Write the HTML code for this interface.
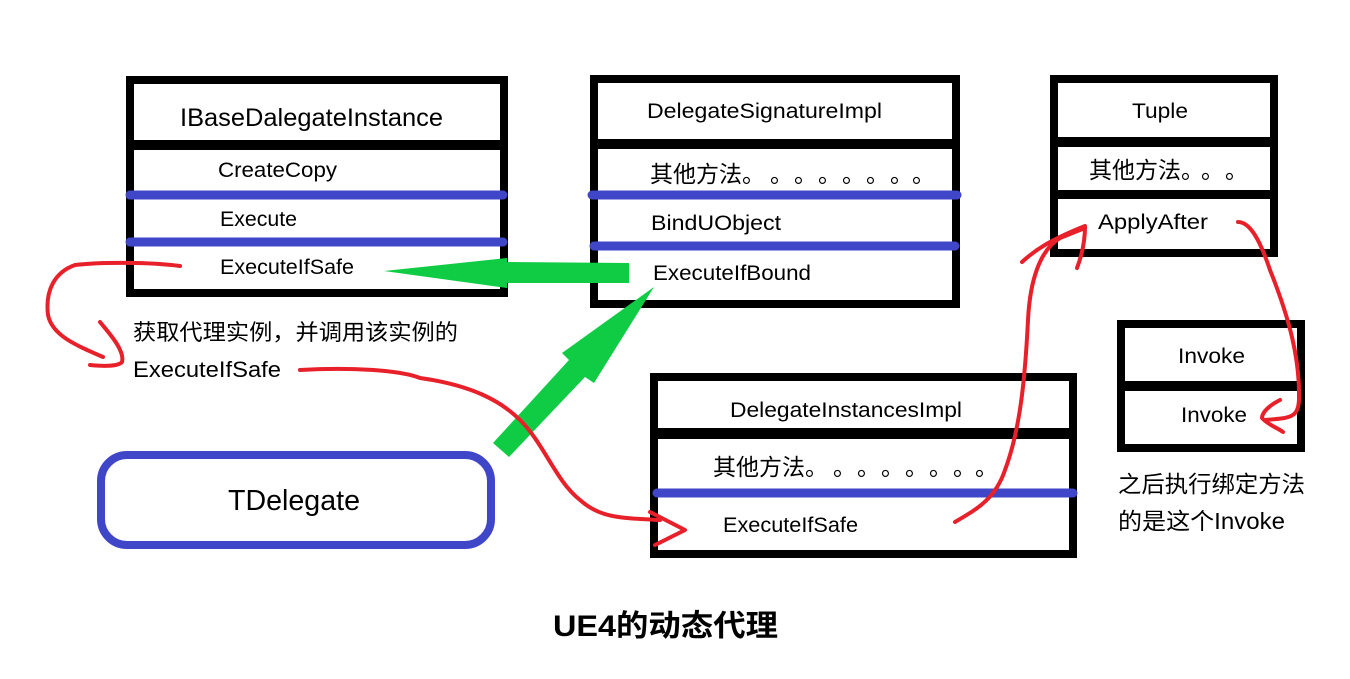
<!DOCTYPE html>
<html><head><meta charset="utf-8"><style>
html,body{margin:0;padding:0;background:#fff;}
svg{display:block}
text{font-family:"Liberation Sans","Noto Sans CJK SC",sans-serif;fill:#000}
</style></head><body>
<svg width="1350" height="679" viewBox="0 0 1350 679" xmlns="http://www.w3.org/2000/svg">
<rect width="1350" height="679" fill="#fff"/>
<!-- Box1 -->
<rect x="130" y="80" width="374" height="213" fill="#fff" stroke="#000" stroke-width="8"/>
<rect x="130" y="140" width="374" height="10" fill="#000"/>
<line x1="130" y1="195" x2="503" y2="195" stroke="#4046c8" stroke-width="9" stroke-linecap="round"/>
<line x1="130" y1="242" x2="503" y2="242" stroke="#4046c8" stroke-width="9" stroke-linecap="round"/>
<text x="180" y="126" font-size="25" textLength="263" lengthAdjust="spacingAndGlyphs">IBaseDalegateInstance</text>
<text x="218" y="177" font-size="21" textLength="119" lengthAdjust="spacingAndGlyphs">CreateCopy</text>
<text x="220" y="226" font-size="21" textLength="77" lengthAdjust="spacingAndGlyphs">Execute</text>
<text x="220" y="274" font-size="21" textLength="134" lengthAdjust="spacingAndGlyphs">ExecuteIfSafe</text>
<!-- Box2 -->
<rect x="594" y="79" width="362" height="225" fill="#fff" stroke="#000" stroke-width="8"/>
<rect x="594" y="139" width="362" height="10" fill="#000"/>
<line x1="592" y1="195" x2="957" y2="195" stroke="#4046c8" stroke-width="9" stroke-linecap="round"/>
<line x1="594" y1="246" x2="955" y2="246" stroke="#4046c8" stroke-width="9" stroke-linecap="round"/>
<text x="647" y="118" font-size="21" textLength="235" lengthAdjust="spacingAndGlyphs">DelegateSignatureImpl</text>
<text x="650" y="182" font-size="23">其他方法。</text>
<text x="770 794 818 842 866 890 912" y="182" font-size="23">。。。。。。。</text>
<text x="651" y="230" font-size="21" textLength="130" lengthAdjust="spacingAndGlyphs">BindUObject</text>
<text x="653" y="280" font-size="21" textLength="158" lengthAdjust="spacingAndGlyphs">ExecuteIfBound</text>
<!-- Tuple -->
<rect x="1054" y="79" width="220" height="174" fill="#fff" stroke="#000" stroke-width="8"/>
<rect x="1054" y="137" width="220" height="10" fill="#000"/>
<rect x="1054" y="190" width="220" height="9" fill="#000"/>
<text x="1132" y="118" font-size="21" textLength="56" lengthAdjust="spacingAndGlyphs">Tuple</text>
<text x="1089" y="178" font-size="23">其他方法。</text>
<text x="1201 1225" y="178" font-size="23">。。</text>
<text x="1098" y="229" font-size="21" textLength="110" lengthAdjust="spacingAndGlyphs">ApplyAfter</text>
<!-- Invoke -->
<rect x="1121" y="324" width="180" height="124" fill="#fff" stroke="#000" stroke-width="8"/>
<rect x="1121" y="381" width="180" height="10" fill="#000"/>
<text x="1178" y="363" font-size="21" textLength="67" lengthAdjust="spacingAndGlyphs">Invoke</text>
<text x="1181" y="422" font-size="21" textLength="66" lengthAdjust="spacingAndGlyphs">Invoke</text>
<!-- Box3 -->
<rect x="654" y="377" width="419" height="177" fill="#fff" stroke="#000" stroke-width="8"/>
<rect x="654" y="428" width="419" height="11" fill="#000"/>
<line x1="657" y1="493" x2="1073" y2="493" stroke="#4046c8" stroke-width="9" stroke-linecap="round"/>
<text x="730" y="417" font-size="21" textLength="232" lengthAdjust="spacingAndGlyphs">DelegateInstancesImpl</text>
<text x="713" y="475" font-size="23">其他方法。</text>
<text x="833 857 881 905 929 953 975" y="475" font-size="23">。。。。。。。</text>
<text x="723" y="532" font-size="21" textLength="135" lengthAdjust="spacingAndGlyphs">ExecuteIfSafe</text>
<!-- right notes -->
<text x="1118" y="492" font-size="23" textLength="187" lengthAdjust="spacingAndGlyphs">之后执行绑定方法</text>
<text x="1118" y="529" font-size="23" textLength="167" lengthAdjust="spacingAndGlyphs">的是这个Invoke</text>
<!-- left notes -->
<text x="133" y="340" font-size="22" textLength="325" lengthAdjust="spacingAndGlyphs">获取代理实例，并调用该实例的</text>
<text x="133" y="377" font-size="22" textLength="148" lengthAdjust="spacingAndGlyphs">ExecuteIfSafe</text>
<!-- TDelegate -->
<rect x="101" y="455" width="390" height="90" rx="26" fill="#fff" stroke="#4046c8" stroke-width="8"/>
<text x="228" y="510" font-size="29" textLength="132" lengthAdjust="spacingAndGlyphs">TDelegate</text>
<!-- title -->
<text x="553" y="636" font-size="30" font-weight="bold" textLength="225" lengthAdjust="spacingAndGlyphs">UE4的动态代理</text>
<!-- green arrows -->
<polygon points="384,271 507,258 507,262 629,263 629,283 507,283 507,288" fill="#10cc44"/>
<polygon points="654,287 594,383 585,377 509,457 493,443 569,360 562,353" fill="#10cc44"/>
<!-- red curves -->
<g fill="none" stroke="#e8202a" stroke-width="4" stroke-linecap="round" stroke-linejoin="round">
<path d="M180,266 C150,262 100,262 75,265 C55,272 45,290 48,315 C52,335 75,345 103,357"/>
<path d="M100,322 C108,332 125,350 122,362 C118,367 100,366 90,365"/>
<path d="M300,370 C350,367 400,370 420,378 C470,385 500,400 520,420 C545,445 555,480 580,500 C600,518 620,518 660,520"/>
<path d="M650,512 L685,530 L655,545"/>
<path d="M955,522 C975,510 995,500 1005,470 C1020,430 1025,380 1028,320 C1030,280 1040,250 1060,238 L1085,228"/>
<path d="M1022,262 C1035,250 1050,240 1085,226 C1085,240 1082,255 1077,268"/>
<path d="M1238,222 C1250,222 1260,240 1270,270 C1290,320 1300,360 1299,400 C1298,418 1290,418 1265,420"/>
<path d="M1280,400 C1270,405 1262,412 1262,418 C1268,425 1278,428 1283,432"/>
</g>
</svg>
</body></html>
